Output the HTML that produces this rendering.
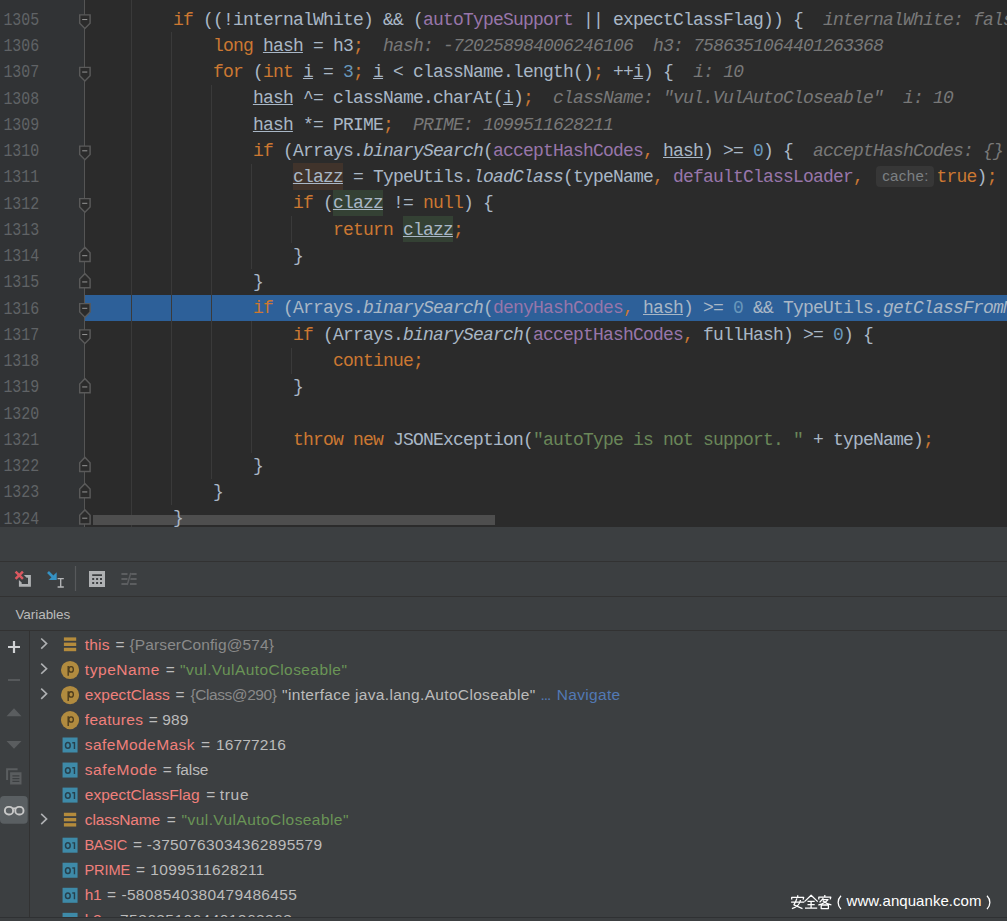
<!DOCTYPE html>
<html><head><meta charset="utf-8"><title>debugger</title>
<style>
*{box-sizing:border-box;margin:0;padding:0}
html,body{width:1007px;height:921px;overflow:hidden;background:#3c3f41}
body{position:relative;font-family:"Liberation Sans",sans-serif}
.abs{position:absolute}
#ed{position:absolute;left:0;top:0;width:1007px;height:527px;background:#2b2b2b;overflow:hidden}
#gut{position:absolute;left:0;top:0;width:85px;height:527px;background:#313335}
#foldline{position:absolute;left:84px;top:0;width:1px;height:527px;background:#555555}
.ln{position:absolute;left:3.4px;font-family:"Liberation Mono",monospace;font-size:14.9px;color:#606366;white-space:pre;height:20px;line-height:20px;transform:scaleY(1.22);transform-origin:0 14.5px}
.cl{position:absolute;font-family:"Liberation Mono",monospace;font-size:18px;letter-spacing:-0.8016px;color:#a9b7c6;white-space:pre;height:26.25px;line-height:26.25px}
.k{color:#cc7832}.d{color:#a9b7c6}.n{color:#6897bb}.s{color:#6a8759}.f{color:#9876aa}
.h{color:#787878;font-style:italic}.i{font-style:italic}
.u{text-decoration:underline;text-decoration-thickness:1px;text-underline-offset:1px}
.bx{position:absolute;height:26.2px;width:50px}
.hint{font-family:"Liberation Sans",sans-serif;font-size:15px;color:#7c8083;white-space:pre}
.vt{position:absolute;white-space:pre;height:20px;line-height:20px;font-family:"Liberation Sans",sans-serif}
.g{position:absolute;width:1px;background:#3a3a3a}
#hl{position:absolute;left:85px;top:295px;width:922px;height:26px;background:#2d6099}
</style></head><body>
<div id="ed">
<div id="gut"></div>
<div id="hl"></div>

<div class="g" style="left:131px;top:0.00px;height:527.00px"></div>
<div class="g" style="left:171px;top:31.70px;height:473.30px"></div>
<div class="g" style="left:211px;top:85.00px;height:393.75px"></div>
<div class="g" style="left:251px;top:163.75px;height:105.00px"></div>
<div class="g" style="left:251px;top:321.25px;height:131.25px"></div>
<div class="g" style="left:291px;top:216.25px;height:26.25px"></div>
<div class="g" style="left:291px;top:347.50px;height:26.25px"></div>
<div id="foldline"></div>
<div class="ln" style="top:10.95px">1305</div>
<div class="ln" style="top:37.20px">1306</div>
<div class="ln" style="top:63.45px">1307</div>
<div class="ln" style="top:89.70px">1308</div>
<div class="ln" style="top:115.95px">1309</div>
<div class="ln" style="top:142.20px">1310</div>
<div class="ln" style="top:168.45px">1311</div>
<div class="ln" style="top:194.70px">1312</div>
<div class="ln" style="top:220.95px">1313</div>
<div class="ln" style="top:247.20px">1314</div>
<div class="ln" style="top:273.45px">1315</div>
<div class="ln" style="top:299.70px">1316</div>
<div class="ln" style="top:325.95px">1317</div>
<div class="ln" style="top:352.20px">1318</div>
<div class="ln" style="top:378.45px">1319</div>
<div class="ln" style="top:404.70px">1320</div>
<div class="ln" style="top:430.95px">1321</div>
<div class="ln" style="top:457.20px">1322</div>
<div class="ln" style="top:483.45px">1323</div>
<div class="ln" style="top:509.70px">1324</div>
<div class="abs" style="left:93px;top:515px;width:402px;height:10px;background:#4e4e4e"></div>
<div class="bx" style="left:293.0px;top:163px;height:27px;background:#40332b"></div>
<div class="bx" style="left:333.0px;top:190px;height:26px;background:#344134"></div>
<div class="bx" style="left:403.0px;top:216px;height:26px;background:#344134"></div>
<div class="cl" style="left:172.9px;top:6.65px"><span class="k">if</span><span class="d"> ((!internalWhite) &amp;&amp; (</span><span class="f">autoTypeSupport</span><span class="d"> || expectClassFlag)) {</span><span class="d">  </span><span class="h">internalWhite: false</span></div>
<div class="cl" style="left:212.9px;top:32.90px"><span class="k">long</span><span class="d"> </span><span class="u">hash</span><span class="d"> = h3</span><span class="k">;</span><span class="d">  </span><span class="h">hash: -720258984006246106  h3: 7586351064401263368</span></div>
<div class="cl" style="left:212.9px;top:59.15px"><span class="k">for</span><span class="d"> (</span><span class="k">int</span><span class="d"> </span><span class="u">i</span><span class="d"> = </span><span class="n">3</span><span class="k">;</span><span class="d"> </span><span class="u">i</span><span class="d"> &lt; className.length()</span><span class="k">;</span><span class="d"> ++</span><span class="u">i</span><span class="d">) {</span><span class="d">  </span><span class="h">i: 10</span></div>
<div class="cl" style="left:252.9px;top:85.40px"><span class="u">hash</span><span class="d"> ^= className.charAt(</span><span class="u">i</span><span class="d">)</span><span class="k">;</span><span class="d">  </span><span class="h">className: "vul.VulAutoCloseable"  i: 10</span></div>
<div class="cl" style="left:252.9px;top:111.65px"><span class="u">hash</span><span class="d"> *= PRIME</span><span class="k">;</span><span class="d">  </span><span class="h">PRIME: 1099511628211</span></div>
<div class="cl" style="left:252.9px;top:137.90px"><span class="k">if</span><span class="d"> (Arrays.</span><span class="i">binarySearch</span><span class="d">(</span><span class="f">acceptHashCodes</span><span class="k">,</span><span class="d"> </span><span class="u">hash</span><span class="d">) &gt;= </span><span class="n">0</span><span class="d">) {</span><span class="d">  </span><span class="h">acceptHashCodes: {}</span></div>
<div class="cl" style="left:292.9px;top:164.15px"><span class="u">clazz</span><span class="d"> = TypeUtils.</span><span class="i">loadClass</span><span class="d">(typeName</span><span class="k">,</span><span class="d"> </span><span class="f">defaultClassLoader</span><span class="k">,</span></div>
<div class="cl" style="left:292.9px;top:190.40px"><span class="k">if</span><span class="d"> (</span><span class="u">clazz</span><span class="d"> != </span><span class="k">null</span><span class="d">) {</span></div>
<div class="cl" style="left:332.9px;top:216.65px"><span class="k">return</span><span class="d"> </span><span class="u">clazz</span><span class="k">;</span></div>
<div class="cl" style="left:292.9px;top:242.90px"><span class="d">}</span></div>
<div class="cl" style="left:252.9px;top:269.15px"><span class="d">}</span></div>
<div class="cl" style="left:252.9px;top:295.40px"><span class="k">if</span><span class="d"> (Arrays.</span><span class="i">binarySearch</span><span class="d">(</span><span class="f">denyHashCodes</span><span class="k">,</span><span class="d"> </span><span class="u">hash</span><span class="d">) &gt;= </span><span class="n">0</span><span class="d"> &amp;&amp; TypeUtils.</span><span class="i">getClassFromMapping</span><span class="d">(typeName) != null) {</span></div>
<div class="cl" style="left:292.9px;top:321.65px"><span class="k">if</span><span class="d"> (Arrays.</span><span class="i">binarySearch</span><span class="d">(</span><span class="f">acceptHashCodes</span><span class="k">,</span><span class="d"> fullHash) &gt;= </span><span class="n">0</span><span class="d">) {</span></div>
<div class="cl" style="left:332.9px;top:347.90px"><span class="k">continue;</span></div>
<div class="cl" style="left:292.9px;top:374.15px"><span class="d">}</span></div>
<div class="cl" style="left:292.9px;top:426.65px"><span class="k">throw</span><span class="d"> </span><span class="k">new</span><span class="d"> JSONException(</span><span class="s">"autoType is not support. "</span><span class="d"> + typeName)</span><span class="k">;</span></div>
<div class="cl" style="left:252.9px;top:452.90px"><span class="d">}</span></div>
<div class="cl" style="left:212.9px;top:479.15px"><span class="d">}</span></div>
<div class="cl" style="left:172.9px;top:505.40px"><span class="d">}</span></div>
<div class="abs" style="left:875.7px;top:166.2px;width:58.5px;height:20.8px;border-radius:4px;background:#373737"></div>
<div class="abs hint" style="left:882.2px;top:163.2px;height:26.2px;line-height:26.2px;letter-spacing:0.4px">cache:</div>
<div class="cl" style="left:936.6px;top:164.15px"><span class="k">true</span><span class="d">)</span><span class="k">;</span></div>
<svg class="abs" style="left:70px;top:0" width="30" height="527" viewBox="70 0 30 527"><path d="M79.7 14.85H90.1V23.25L84.9 28.45L79.7 23.25Z" fill="#2b2b2b" stroke="#5a5a5a" stroke-width="1.45"/><path d="M82.2 19.55H87.3" stroke="#969696" stroke-width="1"/><path d="M79.7 67.35H90.1V75.75L84.9 80.95L79.7 75.75Z" fill="#2b2b2b" stroke="#5a5a5a" stroke-width="1.45"/><path d="M82.2 72.05H87.3" stroke="#969696" stroke-width="1"/><path d="M79.7 146.10H90.1V154.50L84.9 159.70L79.7 154.50Z" fill="#2b2b2b" stroke="#5a5a5a" stroke-width="1.45"/><path d="M82.2 150.80H87.3" stroke="#969696" stroke-width="1"/><path d="M79.7 198.60H90.1V207.00L84.9 212.20L79.7 207.00Z" fill="#2b2b2b" stroke="#5a5a5a" stroke-width="1.45"/><path d="M82.2 203.30H87.3" stroke="#969696" stroke-width="1"/><path d="M79.7 303.60H90.1V312.00L84.9 317.20L79.7 312.00Z" fill="#2b2b2b" stroke="#5a5a5a" stroke-width="1.45"/><path d="M82.2 308.30H87.3" stroke="#969696" stroke-width="1"/><path d="M79.7 329.85H90.1V338.25L84.9 343.45L79.7 338.25Z" fill="#2b2b2b" stroke="#5a5a5a" stroke-width="1.45"/><path d="M82.2 334.55H87.3" stroke="#969696" stroke-width="1"/><path d="M79.7 261.40H90.1V252.70L84.9 247.40L79.7 252.70Z" fill="#2b2b2b" stroke="#5a5a5a" stroke-width="1.45"/><path d="M82.2 255.70H87.3" stroke="#969696" stroke-width="1"/><path d="M79.7 287.65H90.1V278.95L84.9 273.65L79.7 278.95Z" fill="#2b2b2b" stroke="#5a5a5a" stroke-width="1.45"/><path d="M82.2 281.95H87.3" stroke="#969696" stroke-width="1"/><path d="M79.7 392.65H90.1V383.95L84.9 378.65L79.7 383.95Z" fill="#2b2b2b" stroke="#5a5a5a" stroke-width="1.45"/><path d="M82.2 386.95H87.3" stroke="#969696" stroke-width="1"/><path d="M79.7 471.40H90.1V462.70L84.9 457.40L79.7 462.70Z" fill="#2b2b2b" stroke="#5a5a5a" stroke-width="1.45"/><path d="M82.2 465.70H87.3" stroke="#969696" stroke-width="1"/><path d="M79.7 497.65H90.1V488.95L84.9 483.65L79.7 488.95Z" fill="#2b2b2b" stroke="#5a5a5a" stroke-width="1.45"/><path d="M82.2 491.95H87.3" stroke="#969696" stroke-width="1"/><path d="M79.7 523.90H90.1V515.20L84.9 509.90L79.7 515.20Z" fill="#2b2b2b" stroke="#5a5a5a" stroke-width="1.45"/><path d="M82.2 518.20H87.3" stroke="#969696" stroke-width="1"/></svg>
</div>
<div class="abs" style="left:0;top:561px;width:1007px;height:1px;background:#323232"></div>
<div class="abs" style="left:0;top:596px;width:1007px;height:1px;background:#323232"></div>
<div class="abs" style="left:0;top:630px;width:1007px;height:1px;background:#323232"></div>
<div class="abs" style="left:29px;top:631px;width:1px;height:286px;background:#323232"></div>
<div class="abs" style="left:0;top:917px;width:1007px;height:1px;background:#2f3133"></div>
<svg class="abs" style="left:0;top:562px" width="160" height="34" viewBox="0 562 160 34"><path d="M23.9 574.9H30.9V586.8H18.9V579.9L21.7 582.6V583.9H28V577.7H26.6Z" fill="#afb1b3"/><path d="M15.6 571.6L22.9 578.9M22.9 571.6L15.6 578.9" stroke="#db5860" stroke-width="2.5"/><path d="M48 572L54 578" stroke="#3592c4" stroke-width="2.6"/><path d="M56.7 572.2V580H48.7Z" fill="#3592c4"/><path d="M57.6 578.6H63.8M57.6 587H63.8M60.7 578.6V587" stroke="#b4b6b8" stroke-width="1.35" fill="none"/><path d="M75.5 566V591" stroke="#57595b" stroke-width="1.2"/><path fill-rule="evenodd" fill="#afb1b3" d="M89 571.1H105V587H89Z M92.2 574.2H102V576H92.2Z M92.2 578.1H94.2V580H92.2Z M96.1 578.1H98.1V580H96.1Z M100 578.1H102V580H100Z M92.2 582.1H94.2V584H92.2Z M96.1 582.1H98.1V584H96.1Z M100 582.1H102V584H100Z"/><path d="M121.4 574H127.5M121.4 579H127.5M121.4 584H127.5M131.2 574H136.6M130.4 579H136.6M130 584H136.6" stroke="#5c5e60" stroke-width="1.8"/><path d="M130.8 572.9L127.2 585" stroke="#5c5e60" stroke-width="1.5"/></svg>
<div class="vt" style="left:15.4px;top:605.3px;font-size:13.5px;letter-spacing:-0.05px;color:#bbbbbb">Variables</div>
<svg class="abs" style="left:0;top:631px" width="29" height="286" viewBox="0 631 29 286"><path d="M8 647H20M14 641V653" stroke="#d0d2d4" stroke-width="2.2"/><path d="M8 680H20" stroke="#5a5d5f" stroke-width="1.8"/><path d="M6.5 716.2L14 708.3L21.5 716.2Z" fill="#5a5d5f"/><path d="M6.5 740.9L14 748.8L21.5 740.9Z" fill="#5a5d5f"/><path d="M7.1 780V769.2H17.6" stroke="#5a5d5f" stroke-width="2" fill="none"/><path fill-rule="evenodd" fill="#5a5d5f" d="M10.1 772.3H21.5V784.6H10.1Z M12.4 775.3H19.4V776.5H12.4Z M12.4 778H19.4V779.2H12.4Z M12.4 780.7H19.4V781.9H12.4Z"/><rect x="0" y="796" width="27.7" height="27.7" rx="4" fill="#5a5f62"/><rect x="4.9" y="806.9" width="8.2" height="7.6" rx="3.6" fill="none" stroke="#c8c8c8" stroke-width="1.9"/><rect x="15.3" y="806.9" width="8.2" height="7.6" rx="3.6" fill="none" stroke="#c8c8c8" stroke-width="1.9"/><path d="M12.5 808.4H16" stroke="#c8c8c8" stroke-width="1.9"/></svg>
<div class="abs" style="left:30px;top:631px;width:977px;height:286px;overflow:hidden"><div class="abs" style="left:-30px;top:-631px;width:1007px;height:921px">
<div class="vt" style="left:84.8px;top:634.53px;font-size:15.5px;letter-spacing:0.193px;color:#f0807c">this</div>
<div class="vt" style="left:115.5px;top:634.53px;font-size:15.5px;letter-spacing:-1.052px;color:#bbbbbb">=</div>
<div class="vt" style="left:129.5px;top:634.53px;font-size:15.5px;letter-spacing:0.117px;color:#8a8a8a">{ParserConfig@574}</div>
<div class="vt" style="left:84.8px;top:659.58px;font-size:15.5px;letter-spacing:0.551px;color:#f0807c">typeName</div>
<div class="vt" style="left:165.8px;top:659.58px;font-size:15.5px;letter-spacing:-1.052px;color:#bbbbbb">=</div>
<div class="vt" style="left:180.1px;top:659.58px;font-size:15.5px;letter-spacing:0.430px;color:#6a9556">"vul.VulAutoCloseable"</div>
<div class="vt" style="left:84.8px;top:684.63px;font-size:15.5px;letter-spacing:0.047px;color:#f0807c">expectClass</div>
<div class="vt" style="left:175.6px;top:684.63px;font-size:15.5px;letter-spacing:-1.052px;color:#bbbbbb">=</div>
<div class="vt" style="left:190.5px;top:684.63px;font-size:15.5px;letter-spacing:-0.431px;color:#8a8a8a">{Class@290}</div>
<div class="vt" style="left:282.1px;top:684.63px;font-size:15.5px;letter-spacing:0.331px;color:#bbbbbb">"interface java.lang.AutoCloseable"</div>
<div class="vt" style="left:540.6px;top:684.63px;font-size:15.5px;letter-spacing:-1.059px;color:#5279b5">...</div>
<div class="vt" style="left:556.8px;top:684.63px;font-size:15.5px;letter-spacing:0.318px;color:#5279b5">Navigate</div>
<div class="vt" style="left:84.8px;top:709.68px;font-size:15.5px;letter-spacing:0.299px;color:#f0807c">features</div>
<div class="vt" style="left:148.8px;top:709.68px;font-size:15.5px;letter-spacing:-1.052px;color:#bbbbbb">=</div>
<div class="vt" style="left:162.2px;top:709.68px;font-size:15.5px;letter-spacing:0.219px;color:#bbbbbb">989</div>
<div class="vt" style="left:84.8px;top:734.73px;font-size:15.5px;letter-spacing:0.409px;color:#f0807c">safeModeMask</div>
<div class="vt" style="left:201.0px;top:734.73px;font-size:15.5px;letter-spacing:-1.052px;color:#bbbbbb">=</div>
<div class="vt" style="left:215.9px;top:734.73px;font-size:15.5px;letter-spacing:0.148px;color:#bbbbbb">16777216</div>
<div class="vt" style="left:84.8px;top:759.78px;font-size:15.5px;letter-spacing:0.575px;color:#f0807c">safeMode</div>
<div class="vt" style="left:162.8px;top:759.78px;font-size:15.5px;letter-spacing:-1.052px;color:#bbbbbb">=</div>
<div class="vt" style="left:176.2px;top:759.78px;font-size:15.5px;letter-spacing:-0.135px;color:#bbbbbb">false</div>
<div class="vt" style="left:84.8px;top:784.83px;font-size:15.5px;letter-spacing:0.009px;color:#f0807c">expectClassFlag</div>
<div class="vt" style="left:206.3px;top:784.83px;font-size:15.5px;letter-spacing:-1.052px;color:#bbbbbb">=</div>
<div class="vt" style="left:219.7px;top:784.83px;font-size:15.5px;letter-spacing:0.730px;color:#bbbbbb">true</div>
<div class="vt" style="left:84.8px;top:809.88px;font-size:15.5px;letter-spacing:-0.158px;color:#f0807c">className</div>
<div class="vt" style="left:166.7px;top:809.88px;font-size:15.5px;letter-spacing:-1.052px;color:#bbbbbb">=</div>
<div class="vt" style="left:181.6px;top:809.88px;font-size:15.5px;letter-spacing:0.430px;color:#6a9556">"vul.VulAutoCloseable"</div>
<div class="vt" style="left:84.4px;top:835.24px;font-size:14.6px;letter-spacing:-0.254px;color:#f0807c">BASIC</div>
<div class="vt" style="left:133.0px;top:834.93px;font-size:15.5px;letter-spacing:-1.052px;color:#bbbbbb">=</div>
<div class="vt" style="left:146.7px;top:834.93px;font-size:15.5px;letter-spacing:0.344px;color:#bbbbbb">-3750763034362895579</div>
<div class="vt" style="left:84.4px;top:860.29px;font-size:14.6px;letter-spacing:-0.110px;color:#f0807c">PRIME</div>
<div class="vt" style="left:136.0px;top:859.98px;font-size:15.5px;letter-spacing:-1.052px;color:#bbbbbb">=</div>
<div class="vt" style="left:150.3px;top:859.98px;font-size:15.5px;letter-spacing:0.361px;color:#bbbbbb">1099511628211</div>
<div class="vt" style="left:84.7px;top:885.03px;font-size:15.5px;letter-spacing:-0.341px;color:#f0807c">h1</div>
<div class="vt" style="left:107.1px;top:885.03px;font-size:15.5px;letter-spacing:-1.052px;color:#bbbbbb">=</div>
<div class="vt" style="left:121.4px;top:885.03px;font-size:15.5px;letter-spacing:0.344px;color:#bbbbbb">-5808540380479486455</div>
<div class="vt" style="left:84.7px;top:910.08px;font-size:15.5px;letter-spacing:-0.341px;color:#f0807c">h2</div>
<div class="vt" style="left:107.1px;top:910.08px;font-size:15.5px;letter-spacing:-1.052px;color:#bbbbbb">=</div>
<div class="vt" style="left:120.0px;top:910.08px;font-size:15.5px;letter-spacing:0.445px;color:#bbbbbb">7586351064401263368</div>
<svg class="abs" style="left:30px;top:631px" width="60" height="300" viewBox="30 631 60 300"><path d="M41.2 638.50L46.6 643.60L41.2 648.70" fill="none" stroke="#afb1b3" stroke-width="1.6"/><rect x="63.9" y="637.40" width="12.3" height="3.4" fill="#b48b3c"/><rect x="63.9" y="642.60" width="12.3" height="3.4" fill="#b48b3c"/><rect x="63.9" y="647.80" width="12.3" height="3.4" fill="#b48b3c"/><path d="M41.2 663.55L46.6 668.65L41.2 673.75" fill="none" stroke="#afb1b3" stroke-width="1.6"/><circle cx="70.05" cy="670.00" r="9.1" fill="#b18b3f"/><path d="M68.2 666.10V675.85" stroke="#4b3b1d" stroke-width="1.4"/><ellipse cx="71.1" cy="669.40" rx="2.25" ry="2.7" fill="none" stroke="#4b3b1d" stroke-width="1.3"/><path d="M41.2 688.60L46.6 693.70L41.2 698.80" fill="none" stroke="#afb1b3" stroke-width="1.6"/><circle cx="70.05" cy="695.05" r="9.1" fill="#b18b3f"/><path d="M68.2 691.15V700.90" stroke="#4b3b1d" stroke-width="1.4"/><ellipse cx="71.1" cy="694.45" rx="2.25" ry="2.7" fill="none" stroke="#4b3b1d" stroke-width="1.3"/><circle cx="70.05" cy="720.10" r="9.1" fill="#b18b3f"/><path d="M68.2 716.20V725.95" stroke="#4b3b1d" stroke-width="1.4"/><ellipse cx="71.1" cy="719.50" rx="2.25" ry="2.7" fill="none" stroke="#4b3b1d" stroke-width="1.3"/><rect x="62.55" y="737.50" width="15" height="15" fill="#3e8aa8"/><ellipse cx="67.85" cy="745.40" rx="2.35" ry="2.8" fill="none" stroke="#27414d" stroke-width="1.5"/><path d="M72.3 742.70H74.45V748.90" fill="none" stroke="#27414d" stroke-width="1.4"/><rect x="62.55" y="762.55" width="15" height="15" fill="#3e8aa8"/><ellipse cx="67.85" cy="770.45" rx="2.35" ry="2.8" fill="none" stroke="#27414d" stroke-width="1.5"/><path d="M72.3 767.75H74.45V773.95" fill="none" stroke="#27414d" stroke-width="1.4"/><rect x="62.55" y="787.60" width="15" height="15" fill="#3e8aa8"/><ellipse cx="67.85" cy="795.50" rx="2.35" ry="2.8" fill="none" stroke="#27414d" stroke-width="1.5"/><path d="M72.3 792.80H74.45V799.00" fill="none" stroke="#27414d" stroke-width="1.4"/><path d="M41.2 813.85L46.6 818.95L41.2 824.05" fill="none" stroke="#afb1b3" stroke-width="1.6"/><rect x="63.9" y="812.75" width="12.3" height="3.4" fill="#b48b3c"/><rect x="63.9" y="817.95" width="12.3" height="3.4" fill="#b48b3c"/><rect x="63.9" y="823.15" width="12.3" height="3.4" fill="#b48b3c"/><rect x="62.55" y="837.70" width="15" height="15" fill="#3e8aa8"/><ellipse cx="67.85" cy="845.60" rx="2.35" ry="2.8" fill="none" stroke="#27414d" stroke-width="1.5"/><path d="M72.3 842.90H74.45V849.10" fill="none" stroke="#27414d" stroke-width="1.4"/><rect x="62.55" y="862.75" width="15" height="15" fill="#3e8aa8"/><ellipse cx="67.85" cy="870.65" rx="2.35" ry="2.8" fill="none" stroke="#27414d" stroke-width="1.5"/><path d="M72.3 867.95H74.45V874.15" fill="none" stroke="#27414d" stroke-width="1.4"/><rect x="62.55" y="887.80" width="15" height="15" fill="#3e8aa8"/><ellipse cx="67.85" cy="895.70" rx="2.35" ry="2.8" fill="none" stroke="#27414d" stroke-width="1.5"/><path d="M72.3 893.00H74.45V899.20" fill="none" stroke="#27414d" stroke-width="1.4"/><rect x="62.55" y="912.85" width="15" height="15" fill="#3e8aa8"/><ellipse cx="67.85" cy="920.75" rx="2.35" ry="2.8" fill="none" stroke="#27414d" stroke-width="1.5"/><path d="M72.3 918.05H74.45V924.25" fill="none" stroke="#27414d" stroke-width="1.4"/></svg>
</div></div>
<div class="vt" style="left:846.5px;top:891.10px;font-size:15px;letter-spacing:0.051px;color:#ffffff">www.anquanke.com</div>
<svg class="abs" style="left:786px;top:890px" width="221" height="27" viewBox="786 890 221 27" fill="none" stroke="#ffffff" stroke-width="1.3" stroke-linejoin="round"><path transform="translate(790.7 895)" d="M7 0.2V2 M1 4.6V2.4H13L12.4 4.6 M6.2 3.4C5.4 6 4.2 8.2 3.2 9.8L11.8 13.6 M9.8 5C9 9.6 6 12.2 1.2 13.7 M0.4 7.2H13.6"/><path transform="translate(804.1 895)" d="M0.4 6.6L7 0.3L13.6 6.6 M3.4 6.4H10.6 M3.4 9.6H10.6 M0.9 13.2H13.1 M7 6.4V13.2"/><path transform="translate(817.8 895)" d="M7 0.1V1.8 M1 4.4V2.2H13L12.4 4.4 M5.6 3.2L1.8 7.4 M4.8 4.7H10.2C8 7.6 5 9 0.6 10 M5 5.8C7.4 8 10 9.2 13.6 9.8 M3.4 10H10.6V13.6H3.4Z"/><path d="M841 895.7C837.2 899.6 837.2 905.2 841 909.1"/><path d="M987 895.7C990.8 899.6 990.8 905.2 987 909.1"/></svg>
</body></html>
